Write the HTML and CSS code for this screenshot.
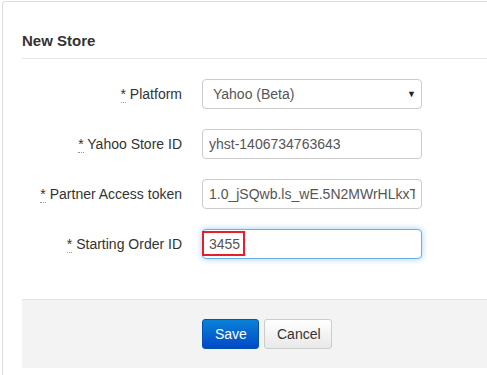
FILE: index.html
```html
<!DOCTYPE html>
<html>
  <head>
    <title>New Store</title>
    <meta name="viewport" content="width=device-width,initial-scale=1">
    <link rel="stylesheet" href="styles.css">
  </head>
  <body>
    <div class="panel">
      <h3 class="panel-title">New Store</h3>
      <form class="store-form">
        <div class="form-row">
          <label class="form-label"><abbr class="req">*</abbr> Platform</label>
          <div class="select-wrap">
            <select class="form-control">
              <option>Yahoo (Beta)</option>
            </select>
            <span class="select-arrow">&#9660;</span>
          </div>
        </div>
        <div class="form-row">
          <label class="form-label"><abbr class="req">*</abbr> Yahoo Store ID</label>
          <input type="text" class="form-control" value="yhst-1406734763643">
        </div>
        <div class="form-row">
          <label class="form-label"><abbr class="req">*</abbr> Partner Access token</label>
          <input type="text" class="form-control" value="1.0_jSQwb.ls_wE.5N2MWrHLkxTkq9Rz.abc">
        </div>
        <div class="form-row">
          <label class="form-label"><abbr class="req">*</abbr> Starting Order ID</label>
          <div class="input-wrap">
            <input type="text" class="form-control focused" value="3455">
            <span class="highlight"></span>
          </div>
        </div>
        <div class="form-actions">
          <button type="button" class="btn btn-primary">Save</button>
          <button type="button" class="btn btn-default">Cancel</button>
        </div>
      </form>
    </div>
  </body>
</html>
```

FILE: styles.css
```css
html, body {
  margin: 0;
  height: 100%;
  overflow: hidden;
  background-color: white;
  font-family: "Liberation Sans", Arial, sans-serif;
  font-size: 14px;
  color: #333;
}
.panel {
  box-sizing: border-box;
  margin: 1px 0 0 2px;
  height: calc(100% - 1px);
  border-left: 1px solid #ddd;
  border-top: 1px solid #ddd;
  border-top-left-radius: 4px;
  padding-left: 19px;
}
.panel-title {
  margin: 0;
  padding: 29px 0 7px;
  font-size: 15px;
  line-height: 20px;
  font-weight: bold;
  color: #333;
  border-bottom: 1px solid #e5e5e5;
}
.store-form {
  padding-top: 20px;
}
.form-row {
  display: flex;
  align-items: center;
  height: 30px;
  margin-bottom: 20px;
}
.form-label {
  width: 160px;
  margin-right: 20px;
  text-align: right;
  line-height: 20px;
  color: #333;
}
.req {
  text-decoration: none;
  border-bottom: 1px dotted #999;
  cursor: help;
}
.form-control {
  box-sizing: border-box;
  width: 220px;
  height: 30px;
  padding: 4px 6px;
  border: 1px solid #ccc;
  border-radius: 4px;
  font-family: inherit;
  font-size: 14px;
  color: #555;
  background-color: white;
  outline: none;
}
.focused {
  border-color: #66afe9;
  box-shadow: 0 0 6px rgba(102, 175, 233, 0.6);
}
.select-wrap, .input-wrap {
  position: relative;
}
select.form-control {
  appearance: none;
  -webkit-appearance: none;
  padding-left: 10px;
}
.select-arrow {
  position: absolute;
  right: 6px;
  top: 10px;
  font-size: 9px;
  color: #222;
  pointer-events: none;
}
.highlight {
  position: absolute;
  left: 0;
  top: 2px;
  width: 43px;
  height: 25px;
  box-sizing: border-box;
  border: 2px solid #e81d2b;
}
.form-actions {
  display: flex;
  justify-content: flex-start;
  gap: 5px;
  margin-top: 40px;
  padding: 19px 0 19px 180px;
  background-color: #f3f3f3;
  border-top: 1px solid #e5e5e5;
}
.btn {
  height: 30px;
  padding: 0 12px;
  border-radius: 3px;
  font-family: inherit;
  font-size: 14px;
  cursor: pointer;
}
.btn-primary {
  width: 57px;
  color: white;
  background: linear-gradient(#0a82d8, #0049c8);
  border: 1px solid #0350b0;
}
.btn-default {
  width: 68px;
  color: #333;
  background: linear-gradient(#fff, #e8e8e8);
  border: 1px solid #ccc;
}
```
